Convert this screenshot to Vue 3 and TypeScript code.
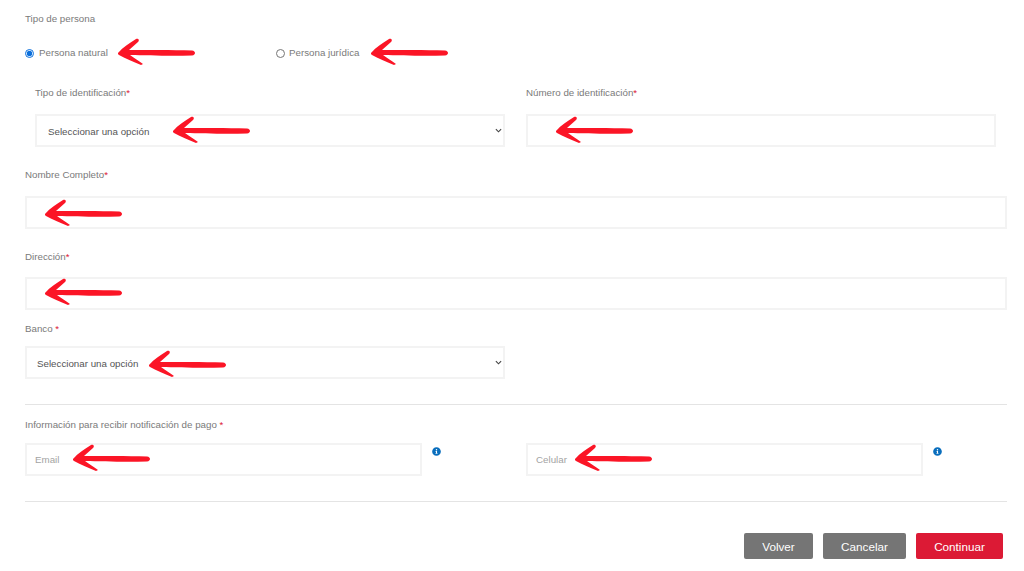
<script setup lang="ts">
interface Arrow { x: number; y: number }
const arrows: Arrow[] = [
  { x: 118, y: 53 }, { x: 371, y: 53 }, { x: 173, y: 131 }, { x: 556, y: 131 },
  { x: 45, y: 214 }, { x: 45, y: 293 }, { x: 149, y: 365 }, { x: 73, y: 459 }, { x: 575, y: 459 },
]
</script>

<template>
  <div class="page">
    <div class="label">Tipo de persona</div>
    <div class="radios">
      <label class="radio natural"><input type="radio" name="tipo" checked /><span>Persona natural</span></label>
      <label class="radio"><input type="radio" name="tipo" /><span>Persona jurídica</span></label>
    </div>

    <div class="id-row">
      <div class="col">
        <div class="label">Tipo de identificación<em>*</em></div>
        <div class="select-wrap gap15">
          <select class="control"><option>Seleccionar una opción</option></select>
          <svg class="chevron" viewBox="0 0 8 5"><path d="M1 1l3 3 3-3" /></svg>
        </div>
      </div>
      <div class="col">
        <div class="label">Número de identificación<em>*</em></div>
        <input class="control gap15" type="text" />
      </div>
    </div>

    <div class="label top22">Nombre Completo<em>*</em></div>
    <input class="control wide gap15" type="text" />

    <div class="label top22">Dirección<em>*</em></div>
    <input class="control wide gap14" type="text" />

    <div class="label top13">Banco <em>*</em></div>
    <div class="select-wrap half gap11">
      <select class="control bank"><option>Seleccionar una opción</option></select>
      <svg class="chevron" viewBox="0 0 8 5"><path d="M1 1l3 3 3-3" /></svg>
    </div>

    <hr class="rule" />

    <div class="label">Información para recibir notificación de pago <em>*</em></div>
    <div class="notify">
      <div class="notify-item">
        <input class="control" type="text" placeholder="Email" />
        <svg class="info" viewBox="0 0 512 512"><path d="M256 8C119 8 8 119 8 256s111 248 248 248 248-111 248-248S393 8 256 8zm0 110a42 42 0 1 1 0 84 42 42 0 0 1 0-84zm56 254c0 7-5 12-12 12h-88c-7 0-12-5-12-12v-24c0-7 5-12 12-12h12v-64h-12c-7 0-12-5-12-12v-24c0-7 5-12 12-12h64c7 0 12 5 12 12v100h12c7 0 12 5 12 12v24z" /></svg>
      </div>
      <div class="notify-item">
        <input class="control" type="text" placeholder="Celular" />
        <svg class="info" viewBox="0 0 512 512"><path d="M256 8C119 8 8 119 8 256s111 248 248 248 248-111 248-248S393 8 256 8zm0 110a42 42 0 1 1 0 84 42 42 0 0 1 0-84zm56 254c0 7-5 12-12 12h-88c-7 0-12-5-12-12v-24c0-7 5-12 12-12h12v-64h-12c-7 0-12-5-12-12v-24c0-7 5-12 12-12h64c7 0 12 5 12 12v100h12c7 0 12 5 12 12v24z" /></svg>
      </div>
    </div>

    <hr class="rule last" />

    <div class="actions">
      <button class="btn volver" type="button">Volver</button>
      <button class="btn cancelar" type="button">Cancelar</button>
      <button class="btn continuar" type="button">Continuar</button>
    </div>

    <svg
      v-for="(a, i) in arrows"
      :key="i"
      class="arrow"
      viewBox="0 0 80 28"
      :style="{ left: a.x - 1 + 'px', top: a.y - 15 + 'px' }"
    >
      <path d="M1 15C6 9 13 5 19 1C21 0 23 2 21 4C18 7 15 9 12 12C30 12 55 12 75 12.500C79 13 79 17 75 17.500C55 18 30 17.500 13 17C17 20 22 23 26 26L24 27C16 24 8 20 2 17C1 16.500 1 16 1 15Z" />
    </svg>
  </div>
</template>

<style scoped>
.page {
  position: relative;
  box-sizing: border-box;
  width: 1024px;
  height: 571px;
  padding: 13px 17px 0 25px;
  overflow: hidden;
  background: #fff;
  font-family: "Liberation Sans", Arial, sans-serif;
  font-size: 9.750px;
  color: #7a7a7a;
}
.label {
  height: 12px;
  line-height: 12px;
  color: #7a7a7a;
}
.label em {
  font-style: normal;
  color: #dc1a35;
}
.top22 { margin-top: 22px; }
.top13 { margin-top: 13px; }
.radios {
  display: flex;
  align-items: center;
  height: 14px;
  margin-top: 21px;
}
.radio {
  display: flex;
  align-items: center;
  gap: 5px;
  line-height: 14px;
}
.radio.natural { width: 251px; }
.radio + .radio { gap: 4px; }
.radio input {
  width: 9px;
  height: 9px;
  margin: 0;
  accent-color: #0b6fdc;
}
.id-row {
  display: flex;
  gap: 21px;
  margin: 27px 0 0 10px;
}
.col { width: 470px; }
.select-wrap { position: relative; }
.control {
  display: block;
  box-sizing: border-box;
  width: 100%;
  height: 33px;
  border: 2px solid #f3f3f3;
  border-radius: 0;
  outline: none;
  background: #fff;
  font-family: "Liberation Sans", Arial, sans-serif;
  font-size: 9.750px;
  color: #555;
  padding: 0 0 0 8px;
}
select.control {
  appearance: none;
  padding: 1px 0 0 11px;
}
select.bank { padding-left: 10px; }
.chevron {
  position: absolute;
  right: 3px;
  top: 14px;
  width: 7px;
  height: 5px;
  fill: none;
  stroke: #444;
  stroke-width: 1.300;
}
.control::placeholder { color: #a3a3a3; opacity: 1; }
.wide { width: 982px; }
.half { width: 480px; }
.gap15 { margin-top: 15px; }
.gap14 { margin-top: 14px; }
.gap11 { margin-top: 11px; }
.rule {
  height: 1px;
  margin: 25px 0 14px;
  border: 0;
  background: #e4e4e4;
}
.rule.last { margin-bottom: 0; }
.notify {
  display: flex;
  margin-top: 12px;
}
.notify-item {
  display: flex;
  flex: none;
  align-items: flex-start;
  gap: 10px;
  width: 501px;
}
.notify-item .control { width: 397px; }
.info {
  flex: none;
  width: 9px;
  height: 9px;
  margin-top: 4px;
  fill: #0a6ebd;
}
.actions {
  display: flex;
  justify-content: flex-end;
  gap: 10px;
  margin: 31px 4px 0 0;
}
.btn {
  height: 26px;
  padding: 0;
  border: 0;
  border-radius: 2px;
  color: #fff;
  font-family: "Liberation Sans", Arial, sans-serif;
  font-size: 11.700px;
}
.volver { width: 69px; background: #757575; }
.cancelar { width: 83px; background: #757575; }
.continuar { width: 87px; background: #dc1a35; }
.arrow {
  position: absolute;
  width: 80px;
  height: 28px;
  fill: #fb1526;
  pointer-events: none;
}
</style>
